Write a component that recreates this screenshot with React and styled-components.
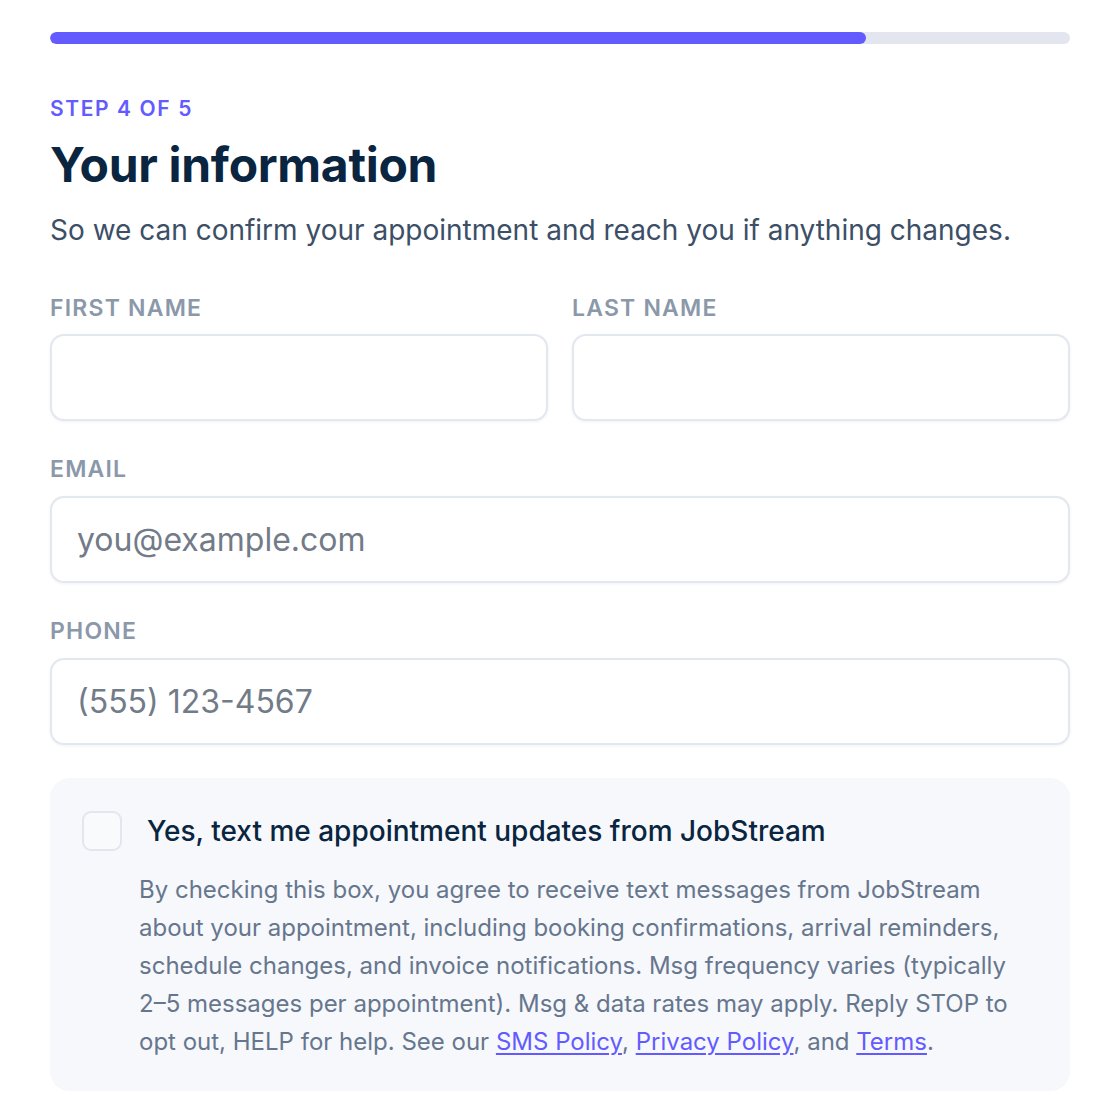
import React from "react";
import styled, { createGlobalStyle } from "styled-components";

const GlobalStyle = createGlobalStyle`
  * { box-sizing: border-box; }
  body {
    margin: 0;
    background: #ffffff;
    font-family: Inter, "Noto Sans", sans-serif;
  }
`;

const Page = styled.main`
  width: 1112px;
  padding: 32px 42px 20px 50px;
`;

const Progress = styled.div`
  height: 12px;
  border-radius: 6px;
  background: #e3e6ef;
  overflow: hidden;
`;

const ProgressFill = styled.div`
  height: 100%;
  border-radius: 6px;
  background: #635bff;
`;

const Step = styled.div`
  margin-top: 52px;
  font-size: 21px;
  font-weight: 600;
  letter-spacing: 1.6px;
  color: #635bff;
  line-height: 26px;
`;

const Title = styled.h1`
  margin: 13px 0 0;
  font-size: 48px;
  font-weight: 700;
  color: #0a2540;
  line-height: 60px;
  letter-spacing: -0.3px;
`;

const Subtitle = styled.p`
  margin: 17px 0 0;
  font-size: 28px;
  color: #3c4f66;
  line-height: 36px;
`;

const Row = styled.div`
  display: grid;
  grid-template-columns: 1fr 1fr;
  gap: 24px;
  margin-top: 46px;
`;

const Field = styled.label`
  display: flex;
  flex-direction: column;
  margin-top: ${(p) => (p.$first ? "0" : "34px")};
`;

const Label = styled.span`
  font-size: 23px;
  font-weight: 600;
  letter-spacing: 1.2px;
  color: #8b98aa;
  line-height: 28px;
  margin-bottom: ${(p) => (p.$tight ? "12px" : "13px")};
`;

const Input = styled.input`
  height: 87px;
  width: 100%;
  border: 2px solid #e3e7ef;
  border-radius: 14px;
  background: #fff;
  padding: 0 25px;
  font-family: inherit;
  font-size: 32px;
  color: #0a2540;
  box-shadow: 0 1px 3px rgba(20, 30, 60, 0.06);
  outline: none;
  &::placeholder {
    color: #727b88;
  }
`;

const Consent = styled.section`
  margin-top: 33px;
  background: #f6f8fc;
  border-radius: 20px;
  padding: 33px 32px 30px;
`;

const ConsentHead = styled.div`
  display: flex;
  align-items: center;
  gap: 25px;
`;

const Box = styled.span`
  width: 40px;
  height: 40px;
  flex: none;
  border: 2px solid #e3e6ee;
  border-radius: 9px;
  background: #f9fafc;
`;

const ConsentTitle = styled.span`
  font-size: 28px;
  font-weight: 500;
  color: #0a2540;
  line-height: 34px;
`;

const ConsentText = styled.p`
  margin: 20px 0 0 57px;
  font-size: 24px;
  line-height: 38px;
  color: #66768d;
  max-width: 880px;
`;

const Link = styled.a`
  color: #635bff;
  text-decoration: underline;
  text-underline-offset: 3px;
`;

export default function App() {
  return (
    <>
      <GlobalStyle />
      <Page>
        <Progress>
          <ProgressFill style={{ width: `${(4 / 5) * 100}%` }} />
        </Progress>
        <Step>STEP 4 OF 5</Step>
        <Title>Your information</Title>
        <Subtitle>So we can confirm your appointment and reach you if anything changes.</Subtitle>

        <Row>
          <Field $first>
            <Label $tight>FIRST NAME</Label>
            <Input type="text" />
          </Field>
          <Field $first>
            <Label $tight>LAST NAME</Label>
            <Input type="text" />
          </Field>
        </Row>

        <Field>
          <Label>EMAIL</Label>
          <Input type="email" placeholder="you@example.com" />
        </Field>

        <Field>
          <Label>PHONE</Label>
          <Input type="tel" placeholder="(555) 123-4567" />
        </Field>

        <Consent>
          <ConsentHead>
            <Box />
            <ConsentTitle>Yes, text me appointment updates from JobStream</ConsentTitle>
          </ConsentHead>
          <ConsentText>
            By checking this box, you agree to receive text messages from JobStream about your
            appointment, including booking confirmations, arrival reminders, schedule changes, and
            invoice notifications. Msg frequency varies (typically 2–5 messages per appointment).
            Msg &amp; data rates may apply. Reply STOP to opt out, HELP for help. See our{" "}
            <Link href="#">SMS Policy</Link>, <Link href="#">Privacy Policy</Link>, and{" "}
            <Link href="#">Terms</Link>.
          </ConsentText>
        </Consent>
      </Page>
    </>
  );
}
